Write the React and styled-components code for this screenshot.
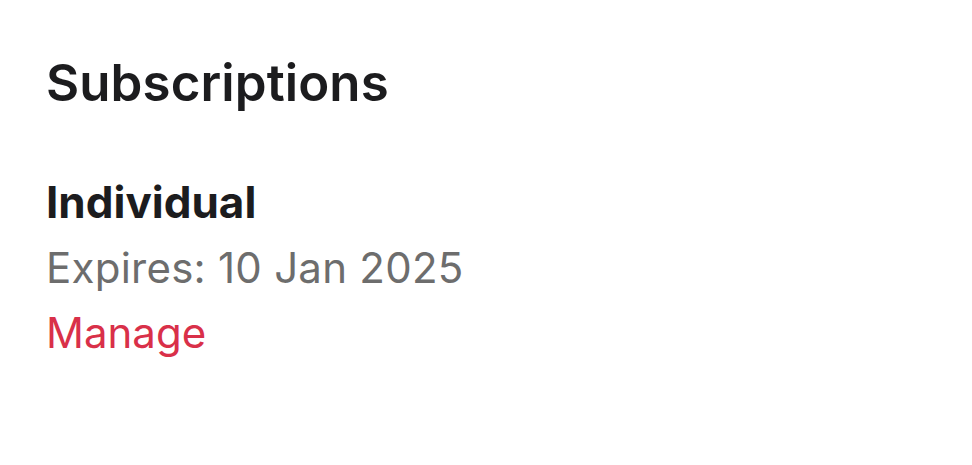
import React from "react";
import styled, { createGlobalStyle } from "styled-components";

const Global = createGlobalStyle`
  html, body { margin: 0; padding: 0; background: #ffffff; }
  body { font-family: Inter, "Noto Sans", sans-serif; -webkit-font-smoothing: antialiased; }
`;

const Page = styled.main`
  display: flex;
  flex-direction: column;
  padding: 50px 46px;
`;

const Title = styled.h1`
  margin: 0 0 54px;
  font-size: 51px;
  line-height: 66px;
  font-weight: 600;
  color: #1c1c1e;
  letter-spacing: 0.1px;
`;

const Item = styled.section`
  display: flex;
  flex-direction: column;
`;

const Line = styled.div`
  font-size: ${(p) => (p.$bold ? "44px" : "42px")};
  line-height: 65px;
  font-weight: ${(p) => (p.$bold ? 700 : 400)};
  letter-spacing: ${(p) => (p.$bold ? "0" : "0.25px")};
  color: ${(p) => p.$color || "#1c1c1e"};
`;

const Link = styled.a`
  font-size: 42px;
  line-height: 65px;
  color: #d93049;
  text-decoration: none;
  cursor: pointer;
`;

export default function App() {
  return (
    <>
      <Global />
      <Page>
        <Title>Subscriptions</Title>
        <Item>
          <Line $bold>Individual</Line>
          <Line $color="#6d6d6d">Expires: 10 Jan 2025</Line>
          <Link>Manage</Link>
        </Item>
      </Page>
    </>
  );
}
